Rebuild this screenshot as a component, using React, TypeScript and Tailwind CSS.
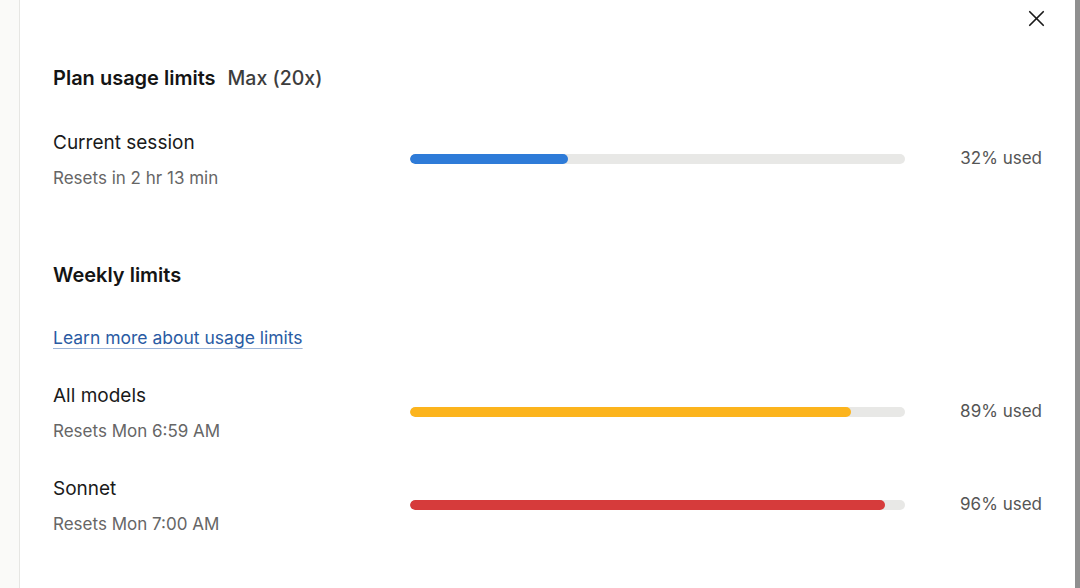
import { X } from 'lucide-react';

type Limit = {
  label: string;
  resets: string;
  pct: number;
  color: string;
};

const weekly: Limit[] = [
  { label: 'All models', resets: 'Resets Mon 6:59 AM', pct: 89, color: 'bg-[#fcb41d]' },
  { label: 'Sonnet', resets: 'Resets Mon 7:00 AM', pct: 96, color: 'bg-[#d63b3b]' },
];

function UsageRow({ label, resets, pct, color }: Limit) {
  return (
    <div className="flex items-center">
      <div className="flex-1">
        <div className="text-[19px] leading-6 text-[#1a1a1a]">{label}</div>
        <div className="mt-[11px] text-[17px] leading-6 text-[#666]">{resets}</div>
      </div>
      <div className="mb-[4px] w-[495px] h-[10px] rounded-full bg-[#e8e8e6] overflow-hidden">
        <div className={`h-full rounded-full ${color}`} style={{ width: `${pct}%` }} />
      </div>
      <div className="mb-[3px] w-[137px] text-right text-[17px] text-[#555]">{pct}% used</div>
    </div>
  );
}

export default function App() {
  return (
    <div className="flex h-[588px] w-[1080px] overflow-hidden bg-white font-['Inter',sans-serif]">
      {/* sidebar sliver */}
      <div className="w-[20px] shrink-0 border-r border-[#e6e6e3] bg-[#fafaf8]" />

      <main className="flex-1 pl-[33px] pr-[33px]">
        <div className="flex h-[37px] items-center justify-end">
          <button className="-mr-[8px] text-[#1a1a1a]">
            <X size={27} strokeWidth={1.5} />
          </button>
        </div>

        <div className="mt-[27px] flex items-baseline gap-3 leading-7">
          <h2 className="text-[20px] font-semibold text-[#141414]">Plan usage limits</h2>
          <span className="text-[19.5px] font-medium text-[#3d3d3d]">Max (20x)</span>
        </div>

        <div className="mt-[39px]">
          <UsageRow label="Current session" resets="Resets in 2 hr 13 min" pct={32} color="bg-[#2e7bd8]" />
        </div>

        <h2 className="mt-[71px] text-[20px] font-semibold leading-7 text-[#141414]">Weekly limits</h2>

        <a
          href="#"
          className="mt-[37px] block w-fit text-[17.5px] leading-6 text-[#2a5ba3] underline decoration-[#9db5d8] underline-offset-[4px]"
        >
          Learn more about usage limits
        </a>

        <div className="mt-[34px] flex flex-col gap-[34px]">
          {weekly.map(l => (
            <UsageRow key={l.label} {...l} />
          ))}
        </div>
      </main>

      {/* scrollbar */}
      <div className="w-[5px] shrink-0 bg-[#8f8f8f]" />
    </div>
  );
}
